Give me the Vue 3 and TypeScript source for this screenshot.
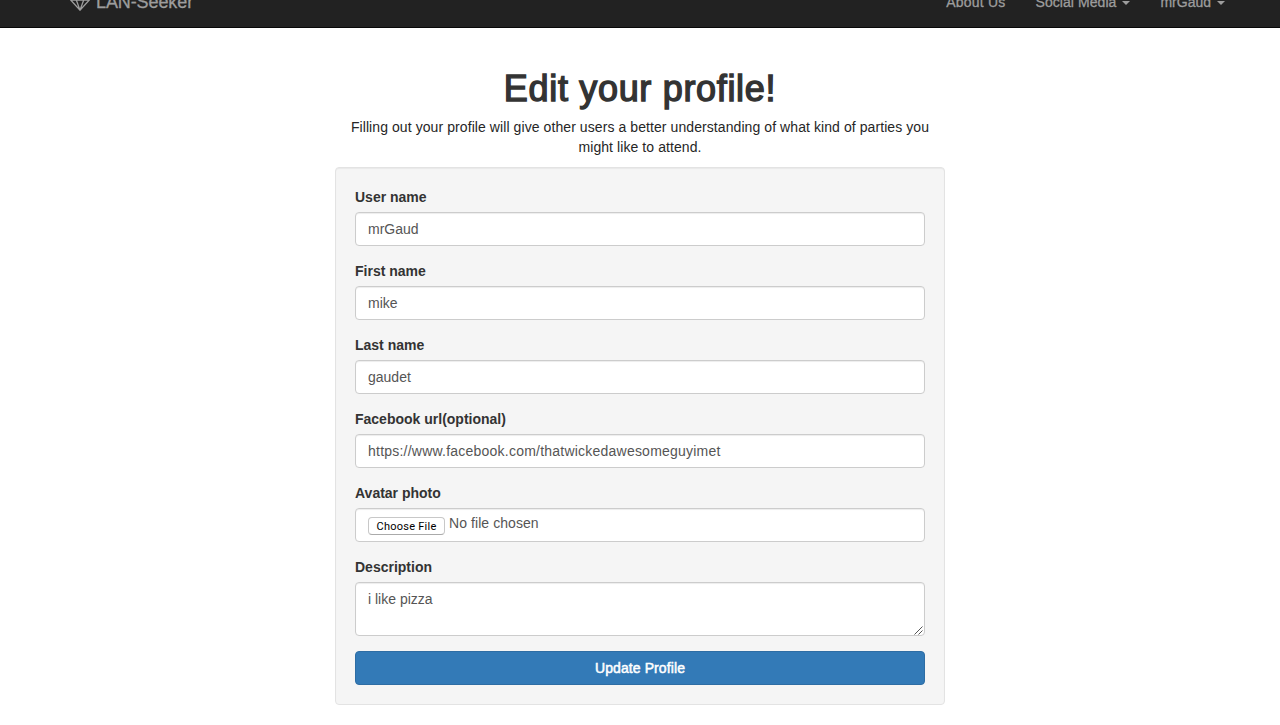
<script setup lang="ts">
import { ref } from 'vue'

interface Field {
  id: string
  label: string
  value: string
}

const fields = ref<Field[]>([
  { id: 'username', label: 'User name', value: 'mrGaud' },
  { id: 'firstname', label: 'First name', value: 'mike' },
  { id: 'lastname', label: 'Last name', value: 'gaudet' },
  { id: 'facebook', label: 'Facebook url(optional)', value: 'https://www.facebook.com/thatwickedawesomeguyimet' },
])
const description = ref('i like pizza')
</script>

<template>
  <div class="page">
    <nav class="navbar">
      <div class="nav-inner">
        <a class="brand">
          <svg class="gem" width="20" height="18" viewBox="0 0 20 18" fill="none" stroke="currentColor" stroke-width="1.3">
            <path d="M4.5 1h11L19.3 7 10 17.2.7 7zM.7 7h18.6M6.3 7 10 17.2 13.7 7M4.5 1l1.8 6L10 1l3.7 6 1.8-6" />
          </svg>
          <span class="brand-name">LAN-Seeker</span>
        </a>
        <ul class="links">
          <li class="about">About Us</li>
          <li class="social"><span>Social Media</span><b class="caret"></b></li>
          <li class="account"><span>mrGaud</span><b class="caret"></b></li>
        </ul>
      </div>
    </nav>

    <main class="content">
      <h1>Edit your profile!</h1>
      <p class="intro">
        <span>Filling out your profile will give other users a better understanding of what kind of parties you</span><br />
        <span>might like to attend.</span>
      </p>
      <form class="well" @submit.prevent>
        <div v-for="f in fields" :key="f.id" class="group">
          <label :for="f.id">{{ f.label }}</label>
          <input :id="f.id" v-model="f.value" class="control" type="text" spellcheck="false" />
        </div>
        <div class="group">
          <label>Avatar photo</label>
          <div class="control file">
            <button type="button" class="choose">Choose File</button>
            <span class="file-name">No file chosen</span>
          </div>
        </div>
        <div class="group">
          <label for="description">Description</label>
          <div class="area-wrap">
            <textarea id="description" v-model="description" class="control area" spellcheck="false"></textarea>
            <svg class="grip" width="9" height="9" viewBox="0 0 9 9" stroke="#555" stroke-width="1">
              <path d="M.5 8.5l8-8M4.5 8.5l4-4" />
            </svg>
          </div>
        </div>
        <button type="submit" class="submit">Update Profile</button>
      </form>
    </main>
  </div>
</template>

<style>
body {
  margin: 0;
  background: #fff;
}
</style>

<style scoped>
.page,
.page * {
  box-sizing: border-box;
}
.page {
  height: 725px;
  overflow: hidden;
  font: 14px/20px 'Liberation Sans', Arial, sans-serif;
  color: #333;
}
.navbar {
  height: 51px;
  margin-top: -23px;
  background: #222;
  border-bottom: 1px solid #080808;
  color: #9d9d9d;
}
.nav-inner {
  width: 1170px;
  height: 50px;
  margin: 0 auto;
  display: flex;
  justify-content: space-between;
}
.brand {
  display: flex;
  align-items: center;
  padding-left: 15px;
  font-size: 18px;
}
.gem {
  margin-right: 6px;
}
.brand-name {
  letter-spacing: -0.1px;
  -webkit-text-stroke: 0.3px;
}
.links {
  display: flex;
  margin: 0 -15px 0 0;
  padding: 0;
  list-style: none;
  -webkit-text-stroke: 0.3px;
}
.links li {
  display: flex;
  align-items: center;
  padding: 0 15px;
}
.about {
  letter-spacing: 0.22px;
}
.social {
  letter-spacing: 0.06px;
}
.caret {
  margin: 2px 0 0 6px;
  border-top: 4px solid;
  border-left: 4px solid transparent;
  border-right: 4px solid transparent;
}
.content {
  width: 610px;
  margin: 0 auto;
}
h1 {
  margin: 41px 0 8px;
  font-size: 36px;
  line-height: 40px;
  font-weight: 400;
  letter-spacing: 0.68px;
  text-align: center;
  white-space: nowrap;
  -webkit-text-stroke: 1.4px #333;
}
.intro {
  margin: 0 0 10px;
  color: #262626;
  letter-spacing: 0.08px;
  text-align: center;
  white-space: nowrap;
}
.well {
  height: 538px;
  padding: 19px;
  background: #f5f5f5;
  border: 1px solid #e3e3e3;
  border-radius: 4px;
  box-shadow: inset 0 1px 1px rgba(0, 0, 0, 0.05);
}
.group {
  margin-bottom: 15px;
}
label {
  display: block;
  width: fit-content;
  margin-bottom: 5px;
  font-weight: 700;
}
.control {
  display: block;
  width: 100%;
  height: 34px;
  margin: 0;
  padding: 6px 12px;
  font: inherit;
  color: #555;
  background: #fff;
  border: 1px solid #ccc;
  border-radius: 4px;
  outline: none;
  box-shadow: inset 0 1px 1px rgba(0, 0, 0, 0.075);
}
#facebook {
  letter-spacing: 0.225px;
}
.file {
  display: flex;
  align-items: flex-start;
}
.choose {
  width: 77px;
  height: 18px;
  margin: 2px 4px 0 0;
  padding: 1px 0 0;
  font: 11px/15px Roboto, sans-serif;
  letter-spacing: 0.25px;
  color: #000;
  background: #fff;
  border: 1px solid #c8c8c8;
  border-bottom-color: #aaa;
  border-radius: 4px;
}
.file-name {
  line-height: 16px;
  letter-spacing: 0.07px;
}
.area-wrap {
  position: relative;
}
.area {
  height: 54px;
  resize: none;
  overflow: hidden;
}
.grip {
  position: absolute;
  right: 2px;
  bottom: 1px;
}
.submit {
  display: block;
  width: 100%;
  height: 34px;
  padding: 0;
  font: inherit;
  letter-spacing: 0.1px;
  color: #fff;
  background: #337ab7;
  border: 1px solid #2e6da4;
  border-radius: 4px;
  -webkit-text-stroke: 0.5px #fff;
}
</style>
